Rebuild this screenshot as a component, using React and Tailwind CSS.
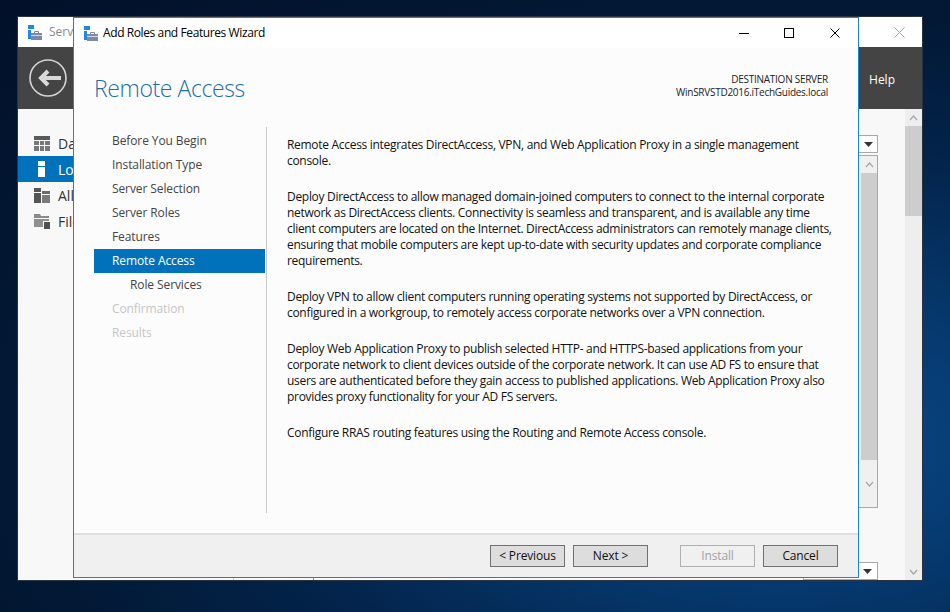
import React from 'react';

const steps = [
  { label: 'Before You Begin' },
  { label: 'Installation Type' },
  { label: 'Server Selection' },
  { label: 'Server Roles' },
  { label: 'Features' },
  { label: 'Remote Access', active: true },
  { label: 'Role Services', sub: true },
  { label: 'Confirmation', disabled: true },
  { label: 'Results', disabled: true },
];

const paragraphs = [
  [
    'Remote Access integrates DirectAccess, VPN, and Web Application Proxy in a single management',
    'console.',
  ],
  [
    'Deploy DirectAccess to allow managed domain-joined computers to connect to the internal corporate',
    'network as DirectAccess clients. Connectivity is seamless and transparent, and is available any time',
    'client computers are located on the Internet. DirectAccess administrators can remotely manage clients,',
    'ensuring that mobile computers are kept up-to-date with security updates and corporate compliance',
    'requirements.',
  ],
  [
    'Deploy VPN to allow client computers running operating systems not supported by DirectAccess, or',
    'configured in a workgroup, to remotely access corporate networks over a VPN connection.',
  ],
  [
    'Deploy Web Application Proxy to publish selected HTTP- and HTTPS-based applications from your',
    'corporate network to client devices outside of the corporate network. It can use AD FS to ensure that',
    'users are authenticated before they gain access to published applications. Web Application Proxy also',
    'provides proxy functionality for your AD FS servers.',
  ],
  ['Configure RRAS routing features using the Routing and Remote Access console.'],
];

const WizardIcon = () => (
  <svg width="16" height="15" viewBox="0 0 16 15" className="shrink-0">
    <rect x="1" y="0" width="6" height="4" fill="#1e88e5" />
    <rect x="1" y="5" width="3" height="9" fill="#1e88e5" />
    <rect x="4" y="8" width="11" height="7" fill="#7d88a8" />
    <rect x="4" y="10" width="11" height="1" fill="#d5d9e4" />
    <path d="M7.5 8V6.5h4V8" fill="none" stroke="#7d88a8" strokeWidth="1" />
  </svg>
);

const ScrollArrow = ({ up }) => (
  <svg width="9" height="6" viewBox="0 0 9 6">
    <path d={up ? 'M1 5l3.5-4L8 5' : 'M1 1l3.5 4L8 1'} fill="none" stroke="#a6a6a6" strokeWidth="1.2" />
  </svg>
);

const Caret = () => (
  <svg width="9" height="5" viewBox="0 0 9 5">
    <path d="M0 0h9L4.5 5z" fill="#333" />
  </svg>
);

const SideIcon = ({ kind }) => {
  if (kind === 'dash')
    return (
      <svg width="16" height="15" viewBox="0 0 16 15" className="shrink-0">
        <rect width="16" height="4" fill="#5a5a5a" />
        <rect y="5" width="5" height="4" fill="#777" />
        <rect x="6" y="5" width="4" height="4" fill="#777" />
        <rect x="11" y="5" width="5" height="4" fill="#777" />
        <rect y="10" width="5" height="5" fill="#777" />
        <rect x="6" y="10" width="4" height="5" fill="#777" />
        <rect x="11" y="10" width="5" height="5" fill="#777" />
      </svg>
    );
  if (kind === 'local')
    return (
      <svg width="16" height="16" viewBox="0 0 16 16" className="shrink-0">
        <rect x="4" width="7" height="5" fill="#fff" />
        <rect x="4" y="6" width="7" height="10" fill="#fff" />
      </svg>
    );
  if (kind === 'all')
    return (
      <svg width="16" height="15" viewBox="0 0 16 15" className="shrink-0">
        <rect width="7" height="4" fill="#555" />
        <rect y="5" width="7" height="10" fill="#555" />
        <rect x="8" y="3" width="8" height="3" fill="#6a6a6a" />
        <rect x="8" y="7" width="8" height="8" fill="#7a7a7a" />
      </svg>
    );
  return (
    <svg width="16" height="15" viewBox="0 0 16 15" className="shrink-0">
      <path d="M0 0h6l1 2h8v2H0z" fill="#8a8a8a" />
      <rect y="5" width="15" height="8" fill="#8f8f8f" />
      <rect x="9" y="7" width="7" height="8" fill="#f8f8f8" />
      <rect x="10" y="8" width="6" height="7" fill="#505050" />
    </svg>
  );
};

const sideItems = [
  { kind: 'dash', label: 'Da' },
  { kind: 'local', label: 'Lo', active: true },
  { kind: 'all', label: 'All' },
  { kind: 'file', label: 'File' },
];

const WizardButton = ({ label, variant }) => {
  const styles = {
    normal: 'border-[#707070] bg-[#dddddd] text-[#111]',
    disabled: 'border-[#b0b0b0] bg-[#f0f0f0] text-[#a3a3a3]',
  };
  return (
    <button className={`h-[22px] w-[75px] border text-[12px] tracking-[-0.15px] ${styles[variant]}`}>
      {label}
    </button>
  );
};

const App = () => {
  return (
    <div className="relative h-[612px] w-[950px] overflow-hidden bg-[radial-gradient(ellipse_at_82%_72%,#0a4a8c_0%,#063a70_22%,#03234a_48%,#021834_70%,#021029_100%)] pl-[17px] pt-[16px] font-['Open_Sans',sans-serif]">
      {/* server manager window behind the wizard */}
      <div className="flex h-[565px] w-[906px] flex-col border border-[#2a3340] bg-[#f8f8f8]">
        <div className="flex h-[30px] items-center justify-between bg-white pl-[9px] pr-[17px]">
          <div className="flex items-center gap-[6px] text-[12px] text-[#888]">
            <WizardIcon />
            <span>Serve</span>
          </div>
          <svg width="11" height="11" viewBox="0 0 11 11">
            <path d="M0.5 0.5l10 10M10.5 0.5l-10 10" stroke="#a8a8a8" strokeWidth="1" />
          </svg>
        </div>
        <div className="flex h-[62px] items-center justify-between bg-[#444] pl-[11px] pr-[27px]">
          <svg width="40" height="40" viewBox="0 0 40 40">
            <circle cx="19" cy="20" r="18" fill="none" stroke="#d5d5d5" strokeWidth="1.6" />
            <path d="M32 20H11M19 13l-7 7 7 7" fill="none" stroke="#d9d9d9" strokeWidth="4" />
          </svg>
          <span className="mt-[3px] text-[12px] text-white">Help</span>
        </div>
        <div className="flex min-h-0 flex-1">
          <div className="w-[887px] pt-[21px]">
            {sideItems.map((item) => (
              <div
                key={item.kind}
                className={`flex h-[26px] w-[70px] items-center gap-[8px] pl-[16px] text-[14px] ${
                  item.active ? 'bg-[#0072bc] text-white' : 'text-[#333]'
                }`}
              >
                <SideIcon kind={item.kind} />
                <span>{item.label}</span>
              </div>
            ))}
          </div>
          <div className="flex w-[17px] flex-col bg-[#eeeeee]">
            <div className="flex h-[17px] items-center justify-center">
              <ScrollArrow up />
            </div>
            <div className="h-[90px] bg-[#cdcdcd]" />
            <div className="flex-1" />
            <div className="flex h-[17px] items-center justify-center">
              <ScrollArrow />
            </div>
          </div>
        </div>
      </div>

      {/* inner controls of the page behind, visible right of the wizard */}
      <div className="absolute left-[858px] top-[135px] flex h-[18px] w-[20px] items-center justify-center border border-[#a8a8a8] bg-white">
        <Caret />
      </div>
      <div className="absolute left-[858px] top-[155px] flex h-[353px] w-[20px] flex-col border border-[#a8a8a8] bg-[#f0f0f0] pl-[2px]">
        <div className="flex h-[17px] items-center justify-center">
          <ScrollArrow up />
        </div>
        <div className="h-[287px] bg-[#cdcdcd]" />
        <div className="flex flex-1 items-center justify-center">
          <ScrollArrow />
        </div>
      </div>
      <div className="absolute left-[803px] top-[562px] flex h-[18px] w-[75px] items-center justify-end border border-[#a8a8a8] bg-white pr-[5px]">
        <Caret />
      </div>
      <div className="absolute left-[233px] top-[570px] h-[10px] w-px bg-[#c8c8c8]" />
      <div className="absolute left-[313px] top-[570px] h-[10px] w-px bg-[#8a8a8a]" />

      {/* wizard dialog */}
      <div className="absolute left-[73px] top-[17px] flex h-[561px] w-[786px] flex-col border border-[#1883d7] bg-[#fcfcfc]">
        <div className="flex h-[30px] shrink-0 items-center justify-between bg-white pl-[9px] pr-[18px]">
          <div className="flex items-center gap-[4px] text-[12px] tracking-[-0.4px] text-black">
            <WizardIcon />
            <span>Add Roles and Features Wizard</span>
          </div>
          <div className="flex items-center">
            <div className="h-px w-[10px] bg-black" />
            <div className="ml-[35px] h-[10px] w-[10px] border border-black" />
            <svg width="10" height="10" viewBox="0 0 10 10" className="ml-[36px]">
              <path d="M0.5 0.5l9 9M9.5 0.5l-9 9" stroke="#000" strokeWidth="1" />
            </svg>
          </div>
        </div>

        <div className="flex h-[79px] shrink-0 justify-between pl-[20px] pr-[30px] pt-[23px]">
          <div className="text-[23px] font-light leading-[34px] tracking-[-0.4px] text-[#1b6ea8]">Remote Access</div>
          <div className="pt-[2px] text-right text-[10px] leading-[13px] tracking-[-0.27px] text-[#222]">
            <div>DESTINATION SERVER</div>
            <div>WinSRVSTD2016.iTechGuides.local</div>
          </div>
        </div>

        <div className="flex min-h-0 flex-1 pb-[20px] pl-[20px]">
          <div className="w-[171px] shrink-0 pt-[2px]">
            {steps.map((step) => (
              <div
                key={step.label}
                className={`flex h-[24px] items-center text-[12px] tracking-[-0.1px] ${step.sub ? 'pl-[36px]' : 'pl-[18px]'} ${
                  step.active ? 'bg-[#0072bc] text-white' : step.disabled ? 'text-[#c6c6c6]' : 'text-[#444]'
                }`}
              >
                {step.label}
              </div>
            ))}
          </div>
          <div className="ml-[1px] w-px bg-[#c8c8c8]" />
          <div className="flex flex-col gap-[20px] pl-[20px] pt-[10px] text-[12px] leading-[16px] tracking-[-0.3px] text-[#111]">
            {paragraphs.map((lines, i) => (
              <p key={i}>
                {lines.map((line) => (
                  <span key={line} className="block whitespace-nowrap">
                    {line}
                  </span>
                ))}
              </p>
            ))}
          </div>
        </div>

        <div className="flex h-[44px] shrink-0 items-center justify-end border-t-2 border-[#dfdfdf] bg-[#f0f0f0] pr-[20px]">
          <div className="flex gap-[8px]">
            <WizardButton label="< Previous" variant="normal" />
            <WizardButton label="Next >" variant="normal" />
          </div>
          <div className="ml-[32px] flex gap-[8px]">
            <WizardButton label="Install" variant="disabled" />
            <WizardButton label="Cancel" variant="normal" />
          </div>
        </div>
      </div>
    </div>
  );
};

export default App;
